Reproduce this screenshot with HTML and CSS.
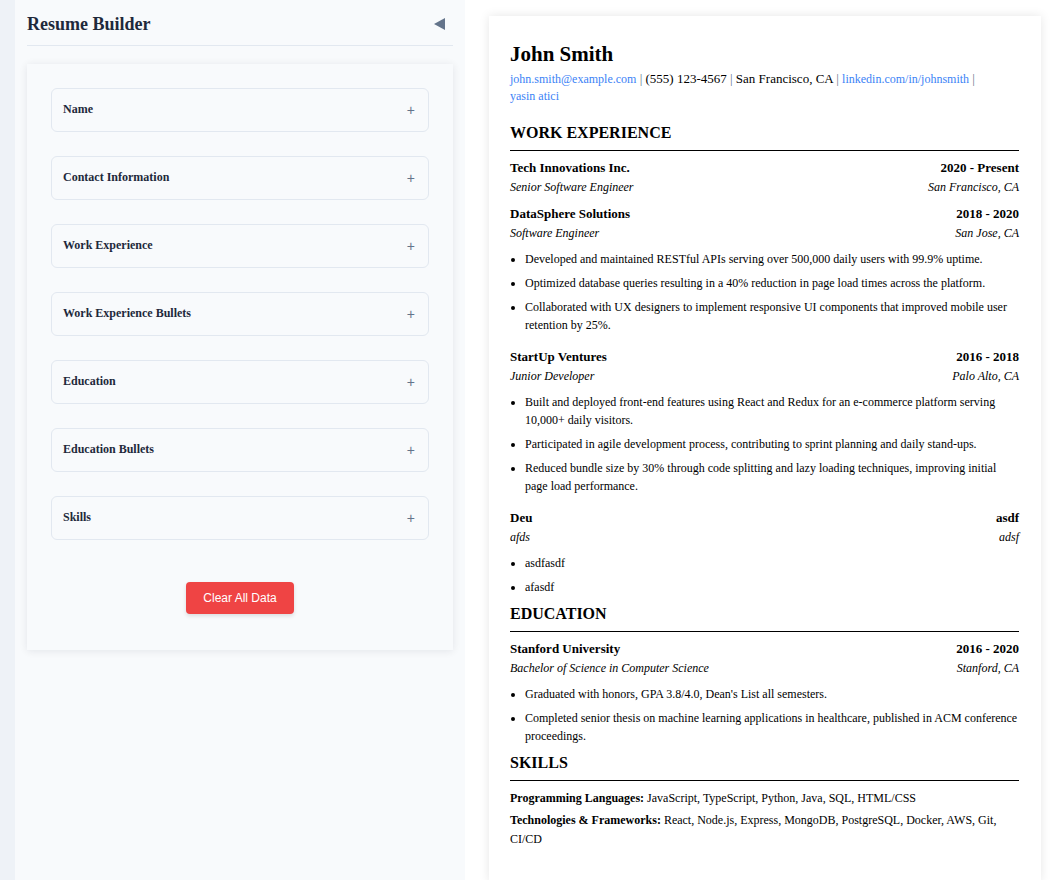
FILE: index.html
```html
<!DOCTYPE html>
<html lang="en">
<head>
<meta charset="utf-8">
<title>Resume Builder</title>
<link rel="stylesheet" href="styles.css">
</head>
<body>
<div class="app">
  <aside class="sidebar">
    <div class="sidebar-header">
      <h1 class="sidebar-title">Resume Builder</h1>
      <button class="collapse-btn" aria-label="Collapse">
        <svg width="12" height="12" viewBox="0 0 12 12"><polygon points="11,0 11,12 0,6" fill="#64748b"/></svg>
      </button>
    </div>
    <div class="form-card">
      <div class="accordion">
        <div class="acc-item"><span class="acc-label">Name</span><span class="acc-plus">+</span></div>
        <div class="acc-item"><span class="acc-label">Contact Information</span><span class="acc-plus">+</span></div>
        <div class="acc-item"><span class="acc-label">Work Experience</span><span class="acc-plus">+</span></div>
        <div class="acc-item"><span class="acc-label">Work Experience Bullets</span><span class="acc-plus">+</span></div>
        <div class="acc-item"><span class="acc-label">Education</span><span class="acc-plus">+</span></div>
        <div class="acc-item"><span class="acc-label">Education Bullets</span><span class="acc-plus">+</span></div>
        <div class="acc-item"><span class="acc-label">Skills</span><span class="acc-plus">+</span></div>
      </div>
      <div class="actions">
        <button class="clear-btn">Clear All Data</button>
      </div>
    </div>
  </aside>
  <main class="preview">
    <div class="paper">
      <h1 class="name">John Smith</h1>
      <p class="contact"><a class="link">john.smith@example.com</a><span class="sep"> | </span>(555) 123-4567<span class="sep"> | </span>San Francisco, CA<span class="sep"> | </span><a class="link">linkedin.com/in/johnsmith</a><span class="sep"> | </span><a class="link">yasin atici</a></p>

      <section class="section">
        <h2 class="section-title">WORK EXPERIENCE</h2>
        <div class="entry">
          <div class="row"><span class="org">Tech Innovations Inc.</span><span class="date">2020 - Present</span></div>
          <div class="row sub"><span>Senior Software Engineer</span><span>San Francisco, CA</span></div>
        </div>
        <div class="entry">
          <div class="row"><span class="org">DataSphere Solutions</span><span class="date">2018 - 2020</span></div>
          <div class="row sub"><span>Software Engineer</span><span>San Jose, CA</span></div>
          <ul class="bullets">
            <li>Developed and maintained RESTful APIs serving over 500,000 daily users with 99.9% uptime.</li>
            <li>Optimized database queries resulting in a 40% reduction in page load times across the platform.</li>
            <li>Collaborated with UX designers to implement responsive UI components that improved mobile user retention by 25%.</li>
          </ul>
        </div>
        <div class="entry">
          <div class="row"><span class="org">StartUp Ventures</span><span class="date">2016 - 2018</span></div>
          <div class="row sub"><span>Junior Developer</span><span>Palo Alto, CA</span></div>
          <ul class="bullets">
            <li>Built and deployed front-end features using React and Redux for an e-commerce platform serving 10,000+ daily visitors.</li>
            <li>Participated in agile development process, contributing to sprint planning and daily stand-ups.</li>
            <li>Reduced bundle size by 30% through code splitting and lazy loading techniques, improving initial page load performance.</li>
          </ul>
        </div>
        <div class="entry">
          <div class="row"><span class="org">Deu</span><span class="date">asdf</span></div>
          <div class="row sub"><span>afds</span><span>adsf</span></div>
          <ul class="bullets">
            <li>asdfasdf</li>
            <li>afasdf</li>
          </ul>
        </div>
      </section>

      <section class="section">
        <h2 class="section-title">EDUCATION</h2>
        <div class="entry">
          <div class="row"><span class="org">Stanford University</span><span class="date">2016 - 2020</span></div>
          <div class="row sub"><span>Bachelor of Science in Computer Science</span><span>Stanford, CA</span></div>
          <ul class="bullets">
            <li>Graduated with honors, GPA 3.8/4.0, Dean's List all semesters.</li>
            <li>Completed senior thesis on machine learning applications in healthcare, published in ACM conference proceedings.</li>
          </ul>
        </div>
      </section>

      <section class="section">
        <h2 class="section-title">SKILLS</h2>
        <p class="skill"><strong>Programming Languages:</strong> JavaScript, TypeScript, Python, Java, SQL, HTML/CSS</p>
        <p class="skill"><strong>Technologies &amp; Frameworks:</strong> React, Node.js, Express, MongoDB, PostgreSQL, Docker, AWS, Git, CI/CD</p>
      </section>
    </div>
  </main>
</div>
</body>
</html>
```

FILE: styles.css
```css
* { box-sizing: border-box; }

html, body {
  margin: 0;
  padding: 0;
}

body {
  font-family: "Liberation Serif", "Times New Roman", serif;
  color: #000;
  background: #eef2f7;
}

.app {
  display: flex;
  min-height: 880px;
  padding-left: 15px;
  background: #eef2f7;
}

/* Sidebar */
.sidebar {
  width: 450px;
  flex: 0 0 450px;
  background: #f8fafc;
  padding: 13px 12px 12px;
}

.sidebar-header {
  display: flex;
  align-items: center;
  justify-content: space-between;
  padding-bottom: 10px;
  border-bottom: 1px solid #e2e8f0;
}

.sidebar-title {
  margin: 0;
  font-size: 18px;
  line-height: 22px;
  font-weight: bold;
  color: #1e293b;
}

.collapse-btn {
  border: 0;
  background: none;
  padding: 0;
  margin-right: 7px;
  width: 12px;
  height: 12px;
  display: flex;
  cursor: pointer;
}

.form-card {
  margin-top: 18px;
  background: #f8fafc;
  padding: 24px 24px 36px;
  box-shadow: 0 1px 8px rgba(15, 23, 42, 0.09);
}

.accordion {
  display: flex;
  flex-direction: column;
  gap: 24px;
}

.acc-item {
  height: 44px;
  border: 1px solid #e2e8f0;
  border-radius: 6px;
  display: flex;
  align-items: center;
  justify-content: space-between;
  padding: 0 13px 0 11px;
}

.acc-label {
  font-size: 12px;
  line-height: 16px;
  font-weight: bold;
  color: #1e293b;
  margin-top: -2px;
}

.acc-plus {
  font-family: "Liberation Sans", Arial, sans-serif;
  font-size: 14px;
  color: #64748b;
  line-height: 1;
}

.actions {
  display: flex;
  justify-content: center;
  margin-top: 42px;
}

.clear-btn {
  background: #ef4444;
  color: #fff;
  border: 0;
  border-radius: 4px;
  height: 32px;
  padding: 0 17px;
  font-family: "Liberation Sans", Arial, sans-serif;
  font-size: 12px;
  box-shadow: 0 2px 4px rgba(0, 0, 0, 0.12);
  cursor: pointer;
}

/* Preview */
.preview {
  flex: 1;
  background: #fff;
  padding: 16px 19px 3px 24px;
}

.paper {
  background: #fff;
  padding: 25px 22px 30px 21px;
  box-shadow: 0 0 10px rgba(0, 0, 0, 0.1);
  min-height: 861px;
}

.name {
  margin: 0;
  font-size: 21px;
  line-height: 26px;
  font-weight: bold;
}

.contact {
  margin: 3px 0 0;
  font-size: 13px;
  line-height: 17px;
}

.link {
  font-size: 12px;
  line-height: 12px;
  color: #3b82f6;
  text-decoration: none;
  white-space: nowrap;
}

.sep {
  color: #64748b;
}

.section {
  margin-top: 8px;
}

.contact + .section {
  margin-top: 19px;
}

.section-title {
  margin: 0 0 8px;
  font-size: 16px;
  line-height: 20px;
  font-weight: bold;
  padding-bottom: 7px;
  border-bottom: 1px solid #000;
}

.section-title + .entry {
  margin-top: 1px;
}

.entry {
  padding-bottom: 8px;
}

.entry:last-child {
  padding-bottom: 0;
}

.row {
  display: flex;
  justify-content: space-between;
  font-size: 13px;
  line-height: 18px;
  font-weight: bold;
}

.row.sub {
  font-size: 12px;
  font-weight: normal;
  font-style: italic;
  margin-top: 1px;
  margin-bottom: 1px;
}

.bullets {
  margin: 8px 0 0;
  padding-left: 15px;
  font-size: 12px;
  line-height: 18px;
}

.bullets li {
  margin-bottom: 6px;
}

.skill {
  margin: 0 0 3px;
  font-size: 12px;
  line-height: 19px;
}
```
